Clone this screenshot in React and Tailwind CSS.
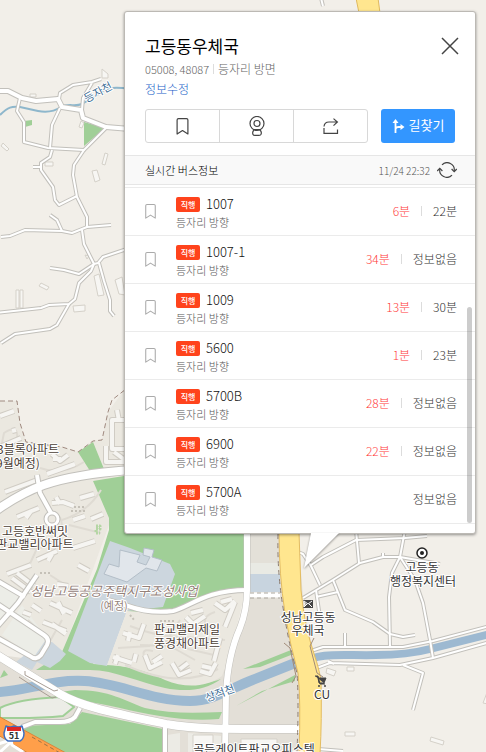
import { useState } from 'react';

const BUSES = [
  { id: 1, number: '1007', first: '6분', second: '22분' },
  { id: 2, number: '1007-1', first: '34분', second: '정보없음' },
  { id: 3, number: '1009', first: '13분', second: '30분' },
  { id: 4, number: '5600', first: '1분', second: '23분' },
  { id: 5, number: '5700B', first: '28분', second: '정보없음' },
  { id: 6, number: '6900', first: '22분', second: '정보없음' },
  { id: 7, number: '5700A', first: null, second: '정보없음' },
];

// Narrow streets
const LANES = [
  'M20 98L17 111L24 122L24 142L48 148L84 150L106 128',
  'M59 99L60 93L73 85L92 82L101 79M92 83L83 98L82 110',
  'M60 108L52 125L50 148',
  'M52 150L50 157L41 163L41 170L53 187L55 200L59 205L77 196M33 167H41',
  'M84 150L74 165L73 175L77 197L87 217V228',
  'M1 237L10 236L25 230L62 231L72 233L87 227L111 225',
  'M50 215L57 220L62 231',
  'M82 230L84 244L94 264M50 268L64 270L79 274L94 264L98 263L103 257L130 248',
  'M94 264L91 271L79 283L75 299L69 304L49 305L41 308L-4 313',
  'M69 304L57 325L50 329L15 334L1 343',
  'M99 263L104 281L110 300V311L114 316',
  'M321 -2L323 6',
  'M298 552L303 554L311 566L320 585',
  'M311 565L323 557L356 540L405 538L427 536',
  'M303 598L333 580L360 563L383 557L400 557L440 564M383 557V553',
  'M356 530L359 563',
  'M405 530L400 557L392 573L389 597L390 647',
  'M400 557L415 580L423 603L430 640L433 658',
  'M316 590L320 618M338 592L316 597',
  'M333 580L345 610L373 622L390 634L403 637L415 635',
  'M345 633V647',
  'M311 651L323 647H403L433 641L490 626',
  'M314 669L330 663L400 665L433 658L490 642M328 661L334 664',
  'M403 665L423 673L413 710',
  'M318 749L343 751',
];

const ROADS = [
  'M-4 91H8L22 98L36 101L58 99L62 107L81 110L83 118L106 127L130 129',
  'M-4 580L25 597M-4 628L18 603L37 575M-4 603L44 635Q50 639 47 645L41 655Q36 661 30 656L-4 637',
  'M80 708L75 717Q70 722 60 722H35L22 727',
  'M165 727V756',
  'M108 600L128 606Q150 614 173 611C190 607 205 590 247 590',
  'M37 475L40 493L51 513',
];

// Apartment blocks
const BLOCKS = [
  'M0 416L14 411M0 447L21 438M12 431L16 430M5 492L40 479M47 474L75 464M52 454L60 461L68 455M53 459H61',
  'M52 503L63 502L74 506M80 498L94 494M56 497L60 504M17 517L39 508M26 518L31 511M73 520L85 516M91 519L103 514',
  'M73 548L95 541M54 537L66 528M37 560L57 551M48 561L52 554M78 565L89 571M7 574L31 565M12 578L31 592M17 573L34 586',
  'M57 584L68 586M50 603L72 613M58 602L64 614M43 622L66 631M52 624L66 634M32 605L41 611M23 612L31 615',
  'M123 633L139 638L144 624M130 632L128 641M113 657L132 663M118 655L115 664M134 662L136 654',
  'M145 655L150 668L162 662M153 662L162 656M172 663L179 675L191 670M180 669L188 663M200 671L210 674L216 663M211 668L202 666',
  'M186 617L193 624L205 616M191 613L203 610M215 603L225 610L235 601M221 602L232 599M220 638L214 661M235 602L225 627',
  'M117 410L119 421M125 420H112V449H125M106 446V462H125M114 452L125 460',
];

const BUILDINGS = [
  'M30 94H36V97H30Z', 'M102 69L108 74V78H102Z', 'M81 121L84 123L82 128L79 127Z', 'M3 143L9 149L7 151L1 146Z',
  'M45 162H53V166H45Z', 'M105 153L108 154L105 165L102 164Z', 'M92 171L97 170L100 180L95 182Z', 'M16 290H19V308H16ZM20 290H23V308H20Z',
  'M41 283L49 287L47 290L39 286Z', 'M73 306L85 305V311L74 312Z', 'M94 276L99 274L104 295L98 296Z', 'M115 280L122 277L125 295L119 294Z',
  'M85 255L89 256L87 259Z', 'M347 667H354V671H347Z', 'M327 668L336 671L334 676L326 673Z', 'M345 732H355V736H345Z',
  'M431 737L444 741L443 745L430 741Z', 'M488 690L483 703L488 704Z', 'M241 739H277V752H241Z', 'M193 735H213V752H193Z',
];

const INK = '#4b4036';

function MapLabel({ x, y, size = 12, color = INK, children, ...rest }) {
  return (
    <text
      x={x}
      y={y}
      fontSize={size}
      fill={color}
      stroke="#ffffff"
      strokeWidth="2"
      paintOrder="stroke"
      textAnchor="middle"
      {...rest}
    >
      {children}
    </text>
  );
}

function MapCanvas() {
  return (
    <svg
      className="absolute inset-0 h-full w-full"
      viewBox="0 0 486 752"
      preserveAspectRatio="xMinYMin slice"
      strokeLinejoin="round"
      aria-label="지도"
    >
      <rect width="486" height="752" fill="#f2efe9" />

      {/* Land use */}
      <path d="M0 401H17L20 423L26 442L62 447L78 452L93 441L102 440L108 412L125 389V480L109 525L60 660L40 665L0 640Z" fill="#ebe8e0" />
      <path d="M0 655L60 663L125 667L220 672L249 600V534H298L303 597L320 680V752H0Z" fill="#e3dfd7" />
      <path d="M78 452L93 442L104 469L90 471ZM93 481L130 475L249 500V588C225 590 205 598 187 608L165 612L125 612L93 664C120 665 145 667 170 681C190 688 205 684 221 679C205 691 185 692 165 688C140 683 115 670 90 670H36L44 665L62 652L97 569L109 530V518Z" fill="#a0cf97" />
      <path d="M110 541L130 548L170 564L175 574L163 607L127 611L107 666L90 663L68 651Z" fill="#ccd6de" />
      <path d="M16 662L42 641L52 642L66 654L60 661L50 668L37 662L32 670Z" fill="#ccd6de" />
      <path d="M127 611L163 613L180 611C200 602 215 592 245 592L230 655L222 676C205 688 185 688 165 680C145 670 125 666 107 665Z" fill="#ebe8e0" />
      <path d="M0 583L22 596L0 625ZM22 605L47 638L34 657L2 635Z" fill="#ecede7" />
      <path d="M0 718C12 718 35 719 63 716L74 707L60 697C40 698 15 700 0 708Z" fill="#ecede7" stroke="#a0cf97" strokeWidth="2" />
      <path d="M60 692L75 690C110 690 125 701 145 708C170 714 195 713 222 712L219 719C185 722 150 715 120 708C95 702 75 701 60 692Z" fill="#a0cf97" />
      <path d="M22 726L70 724L82 712L163 729V752H60L28 737Z" fill="#a0cf97" />
      <path d="M0 678L8 675L4 670ZM84 122L105 128L84 146ZM24 121L32 120V125L25 127Z" fill="#a0cf97" />
      <path d="M243 669L291 650V655L260 667ZM236 706L295 675V681L262 691Z" fill="#a0cf97" />
      <path d="M249 534H280V563H249Z" fill="#e3e0d8" />
      <path d="M249 563H280V574H249Z" fill="#e9eae4" />
      <path d="M249 574H280V592H249ZM310 600L318 602V612L309 609Z" fill="#c8d4df" />
      <path d="M167 735L180 733V752H167ZM188 733L221 736V752H188Z" fill="#ecebe5" />
      <path d="M302 752L486 752V534L302 534L304 610L320 680Z" fill="#f2efe9" />

      {/* Construction site buildings */}
      <g fill="#e1e6eb" stroke="#b3bec8" strokeWidth="1">
        <path d="M120 550L140 555L137 562L146 565L150 557L143 555L144 548L154 550L152 557L162 560L157 571L146 568L127 582L104 574L109 564L119 567Z" />
      </g>

      {/* Paths inside the complexes */}
      <g fill="none" stroke="#dfdbd3" strokeWidth="2">
        <path d="M4 433Q19 423 17 440Q4 451 2 443ZM40 468Q62 476 84 462M8 500L40 489M60 517Q69 540 37 549L3 545M62 520Q88 512 101 490M69 525L101 533M45 531L28 568M50 575L73 590M28 620L50 641L62 620" />
        <path d="M130 626Q160 638 185 637L225 640M140 645L175 646L214 655M118 648L150 646M161 649L180 620M170 646L195 660M125 665Q180 690 218 669M151 670Q135 646 153 651M208 630Q199 617 215 612" />
      </g>
      <g fill="none" stroke="#d0ccc4" strokeWidth="6">
        {BLOCKS.map((d) => <path key={d} d={d} />)}
      </g>
      <g fill="none" stroke="#f6f5f2" strokeWidth="4">
        {BLOCKS.map((d) => <path key={d} d={d} />)}
      </g>
      <g fill="#f7f6f3" stroke="#d5d1c9" strokeWidth="1">
        {BUILDINGS.map((d) => <path key={d} d={d} />)}
      </g>
      <path d="M71 511h14M74 507h12M40 573h10M160 621h14M130 615l5 6" fill="none" stroke="#c5c1b8" strokeWidth="2" strokeDasharray="2 2" />
      <path d="M96 526h4v3h-4v4h4" fill="none" stroke="#b5d6a4" strokeWidth="3" strokeDasharray="2 1" />

      {/* Water */}
      <path d="M0 115C8 107 12 106 20 107L38 111C48 113 55 111 61 107C68 103 75 107 82 104L97 95C105 88 112 86 130 89" fill="none" stroke="#8eb7cc" strokeWidth="2" />
      <path d="M-4 692C25 692 50 679 85 681C120 683 150 701 190 701C212 701 230 689 250 681L300 661" fill="none" stroke="#9db9d1" strokeWidth="10" />
      <path d="M300 664C320 651 345 656 376 655C400 655 415 653 430 649L490 634" fill="none" stroke="#9db9d1" strokeWidth="8" />

      {/* Dashed district borders */}
      <path d="M0 401H17L20 423L26 442L62 447L78 452L93 441L102 440L108 412L112 400L126 389" fill="none" stroke="#a08a80" strokeWidth="1" strokeDasharray="5 3" />

      {/* Roads */}
      <g fill="none" stroke="#c2c0bb">
        <g strokeWidth="4">{LANES.map((d) => <path key={d} d={d} />)}</g>
        <g strokeWidth="6">{ROADS.map((d) => <path key={d} d={d} />)}</g>
        <path d="M247 530V590Q247 610 240 628Q228 655 226 693L225 756" strokeWidth="7" />
        <path d="M-6 512C25 490 50 476 130 470" strokeWidth="10" />
        <path d="M-6 653L60 694C80 706 110 712 166 724C200 730 240 729 300 729" strokeWidth="9" />
        <circle cx="52" cy="519" r="6" strokeWidth="5" />
      </g>
      <g fill="none" stroke="#ffffff">
        <g strokeWidth="2">{LANES.map((d) => <path key={d} d={d} />)}</g>
        <g strokeWidth="4">{ROADS.map((d) => <path key={d} d={d} />)}</g>
        <path d="M247 530V590Q247 610 240 628Q228 655 226 693L225 756" strokeWidth="6" />
        <path d="M-6 512C25 490 50 476 130 470" strokeWidth="8" />
        <path d="M-6 653L60 694C80 706 110 712 166 724C200 730 240 729 300 729" strokeWidth="8" />
        <circle cx="52" cy="519" r="6" strokeWidth="3" />
        <path d="M250 595H280" strokeWidth="5" />
      </g>
      <path d="M250 593H280M250 598H280" stroke="#aaa69e" strokeWidth="1" strokeDasharray="4 3" />
      <path d="M19 677L28 683L52 698L56 697M25 671V675L54 691L58 690" fill="none" stroke="#a89d94" strokeWidth="1" />

      {/* Highways */}
      <path d="M-2 716L66 753H28L-2 735Z" fill="#ff9f4a" stroke="#d9863c" />
      <path d="M32 737L60 753" stroke="#9a7347" strokeWidth="1" strokeDasharray="4 3" />
      <path d="M-2 744L11 740L12 745L23 752M11 742L0 752" fill="none" stroke="#ffffff" strokeWidth="3" />
      <path d="M356 -2L359 13H380L378 -2Z" fill="#ffe68f" stroke="#dfb95f" />
      <path d="M279 532Q279 575 285 613Q290 645 298 673Q301 700 299 754H320Q322 720 321 680Q318 665 315 657Q304 625 301 590L299 532Z" fill="#ffe68f" stroke="#e3bc62" />
      <path d="M278 534Q277 575 284 613Q289 645 297 673Q299 700 297 752" fill="none" stroke="#8d7d70" strokeWidth="1" strokeDasharray="5 4" />
      <path d="M284 643L290 648L296 676L292 683M314 638L310 646L317 673L323 677" fill="none" stroke="#a18b78" strokeWidth="1" />

      {/* Labels */}
      <g fontFamily='"Noto Sans CJK KR", sans-serif'>
        <MapLabel x={98} y={96} size={11} color="#3d6c94" transform="rotate(-28 98 92)">등자천</MapLabel>
        <MapLabel x={220} y={697} size={11} color="#3d6c94" transform="rotate(-20 220 693)">상적천</MapLabel>
        <MapLabel x={28} y={454}>3블록아파트</MapLabel>
        <MapLabel x={18} y={468}>9월예정)</MapLabel>
        <MapLabel x={35} y={536}>고등호반써밋</MapLabel>
        <MapLabel x={35} y={549}>판교밸리아파트</MapLabel>
        <MapLabel x={114} y={596} size={13} color="#94817a" fontStyle="italic">성남고등공공주택지구조성사업</MapLabel>
        <MapLabel x={114} y={610} size={11} color="#94817a">(예정)</MapLabel>
        <MapLabel x={187} y={634}>판교밸리제일</MapLabel>
        <MapLabel x={187} y={648}>풍경채아파트</MapLabel>
        <MapLabel x={422} y={572} color="#333333">고등동</MapLabel>
        <MapLabel x={423} y={586} color="#333333">행정복지센터</MapLabel>
        <MapLabel x={308} y={622} color="#333333">성남고등동</MapLabel>
        <MapLabel x={308} y={635} color="#333333">우체국</MapLabel>
        <MapLabel x={322} y={699} color="#333333">CU</MapLabel>
        <MapLabel x={254} y={754} color="#333333">골든게이트판교오피스텔</MapLabel>
      </g>

      {/* Markers */}
      <circle cx="422" cy="553" r="5" fill="#ffffff" stroke="#222222" strokeWidth="1.5" />
      <circle cx="422" cy="553" r="2" fill="#222222" />
      <path d="M303 600H313V608H303L306 604Z" fill="#444444" />
      <path d="M304 601L308 604L312 601M304 607L307 604M312 607L309 604" fill="none" stroke="#ffffff" strokeWidth="1" />
      <path d="M315 676H318L320 684H325M318 678H326L324 683H319Z" fill="#444444" stroke="#444444" strokeWidth="1" />
      <circle cx="319" cy="686" r="1" fill="#444444" />
      <circle cx="325" cy="686" r="1" fill="#444444" />
      <path d="M6 726Q10 728 14 726Q18 728 22 726L24 733Q24 739 20 741H8Q4 739 4 733Z" fill="#ffffff" stroke="#3f6fc0" strokeWidth="1.5" />
      <path d="M7 727H21V731H7Z" fill="#dd2727" />
      <text x="14" y="739" fontSize="9" fontWeight="700" textAnchor="middle" fill="#333333" fontFamily='"Noto Sans CJK KR", sans-serif'>51</text>
    </svg>
  );
}

function BookmarkIcon({ className }) {
  return (
    <svg className={className} viewBox="0 0 12 17" fill="none" stroke="currentColor" strokeWidth="1.2" strokeLinejoin="round">
      <path d="M2 .6H10Q11.4 .6 11.4 2V16L6 12.6L.6 16V2Q.6 .6 2 .6Z" />
    </svg>
  );
}

function BusRow({ bus }) {
  return (
    <li className="flex h-12 items-center border-t border-[#ebebeb] pr-[18px] pb-px pl-5">
      <button type="button" aria-label={`${bus.number} 즐겨찾기`} className="text-[#aaa]">
        <BookmarkIcon className="h-[15px] w-[11px]" />
      </button>
      <div className="ml-5 flex-1 pt-1">
        <div className="flex items-center gap-[6px]">
          <span className="h-[15px] w-6 rounded-[2px] bg-[#ff431c] text-center text-[8px] leading-[15px] font-medium text-white">직행</span>
          <a href="#" className="text-[13px] leading-[18px] font-light text-[#111]">{bus.number}</a>
        </div>
        <p className="text-[11px] leading-[18px] font-light text-[#555]">등자리 방향</p>
      </div>
      <div className="flex items-center gap-[11px] text-[12px] leading-[18px] font-light">
        {bus.first && (
          <>
            <span className="text-[#ff3a3a]">{bus.first}</span>
            <span className="h-[10px] w-px bg-[#dcdcdc]" />
          </>
        )}
        <span className="text-[#333]">{bus.second}</span>
      </div>
    </li>
  );
}

export default function App() {
  const [open, setOpen] = useState(true);

  return (
    <div className="relative min-h-screen overflow-hidden bg-[#f2efe9] font-['Noto_Sans_CJK_KR',sans-serif]">
      <MapCanvas />

      {open && (
        <main className="relative mt-[11px] mr-[10px] ml-[124px] rounded-[3px] border border-[#bcb9b4] bg-white pb-[9px] shadow-[0_1px_3px_rgba(0,0,0,0.4)]">
          {/* Stop summary */}
          <header className="px-5 pt-[22px] pb-3">
            <div className="flex items-center justify-between">
              <h1 className="text-[17px] leading-6 font-normal text-black">고등동우체국</h1>
              <button type="button" aria-label="닫기" className="-mr-1 text-[#444]" onClick={() => setOpen(false)}>
                <svg className="h-[18px] w-[18px]" viewBox="0 0 18 18" fill="none" stroke="currentColor" strokeWidth="1.5">
                  <path d="M1 1L17 17M17 1L1 17" />
                </svg>
              </button>
            </div>
            <p className="mt-px flex items-center gap-1 text-[12px] leading-5 font-light text-[#666]">
              <span className="text-[11px]">05008, 48087</span>
              <span className="h-[10px] w-px bg-[#ddd]" />
              <span>등자리 방면</span>
            </p>
            <a href="#" className="block text-[12px] leading-5 font-light text-[#1a5fc8]">정보수정</a>

            <div className="mt-[10px] flex gap-[13px]">
              <div className="flex h-[34px] flex-1 divide-x divide-[#d8d8d8] rounded-[3px] border border-[#d8d8d8] text-[#444]">
                <button type="button" aria-label="즐겨찾기" className="flex flex-1 items-center justify-center">
                  <BookmarkIcon className="h-[17px] w-[13px]" />
                </button>
                <button type="button" aria-label="로드뷰" className="flex flex-1 items-center justify-center">
                  <svg className="h-5 w-4" viewBox="0 0 16 20" fill="none" stroke="currentColor" strokeWidth="1.2">
                    <circle cx="8" cy="7.5" r="7" />
                    <circle cx="8" cy="7.5" r="3" />
                    <path d="M4.4 13.6H11.6M5 14Q3 16 4 18.4Q4.4 19.4 6 19.4H10Q11.6 19.4 12 18.4Q13 16 11 14" />
                  </svg>
                </button>
                <button type="button" aria-label="공유" className="flex flex-1 items-center justify-center">
                  <svg className="h-4 w-4" viewBox="0 0 16 16" fill="none" stroke="currentColor" strokeWidth="1.2">
                    <path d="M1 10V15.4H14.5V11.5M1 8.5Q1.5 4 6 4H14M10.5 .6L14.4 4L10.5 7.6" />
                  </svg>
                </button>
              </div>
              <button type="button" className="flex h-[34px] w-[74px] items-center justify-center gap-1 rounded-[3px] bg-[#3396ff] pb-[2px] text-[13px] text-white">
                <svg className="mt-[2px] h-[14px] w-[13px]" viewBox="0 0 13 14" fill="none" stroke="currentColor" strokeWidth="1.8">
                  <path d="M3.5 14V2M3.5 10Q4 8 6.5 8H10" />
                  <path d="M.5 4L3.5 0L6.5 4ZM8.5 5L12.5 8L8.5 11Z" fill="currentColor" stroke="none" />
                </svg>
                길찾기
              </button>
            </div>
          </header>

          {/* Arrival times */}
          <section className="relative">
            <div className="flex h-[30px] items-center justify-between border-y border-[#e6e6e6] bg-[#f9f9f9] pr-[18px] pl-5">
              <h2 className="text-[11px] font-light text-black">실시간 버스정보</h2>
              <div className="flex items-center gap-[7px]">
                <time className="text-[10px] font-light text-[#555]">11/24 22:32</time>
                <button type="button" aria-label="새로고침" className="text-[#444]">
                  <svg className="h-4 w-5" viewBox="0 0 20 16" fill="none" stroke="currentColor" strokeWidth="1.2">
                    <path d="M5 2.8A7.2 7.2 0 0 1 17.2 9M15 13.2A7.2 7.2 0 0 1 2.8 7" />
                    <path d="M14.6 7L17.2 9.6L19.8 7M.2 9L2.8 6.4L5.4 9" />
                  </svg>
                </button>
              </div>
            </div>
            <ul className="mt-[2px] border-b border-[#ebebeb]">
              {BUSES.map((bus) => (
                <BusRow key={bus.id} bus={bus} />
              ))}
            </ul>
            <div className="absolute right-[3px] bottom-px h-[216px] w-[5px] rounded-full bg-black/20" />
          </section>

          {/* Callout tail */}
          <svg className="absolute top-full right-[136px] h-9 w-9 drop-shadow-[0_1px_1px_rgba(0,0,0,0.4)]" viewBox="0 0 36 36">
            <path d="M8 0H36L1 35Z" fill="#ffffff" />
          </svg>
        </main>
      )}
    </div>
  );
}
